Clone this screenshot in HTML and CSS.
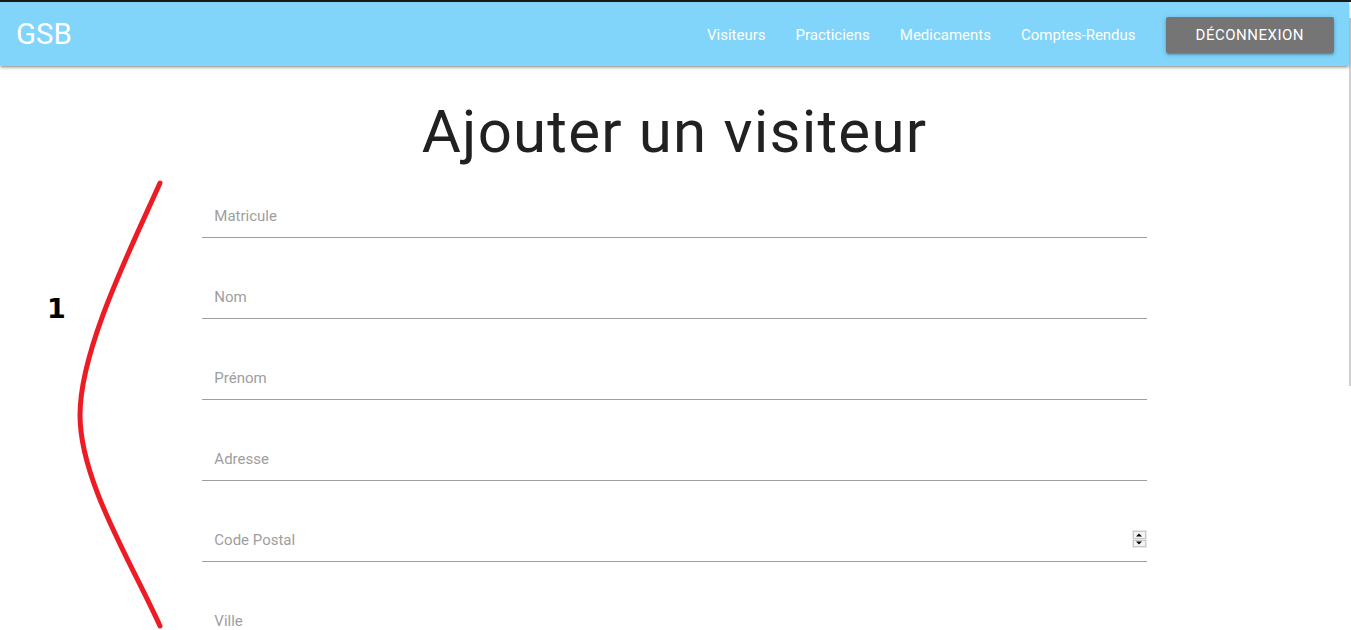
FILE: index.html
```html
<!DOCTYPE html>
<html lang="fr">
<head>
<meta charset="utf-8">
<title>GSB - Ajouter un visiteur</title>
<link rel="stylesheet" href="styles.css">
</head>
<body>
<div class="topline"></div>
<div class="page">
  <nav class="navbar">
    <a class="brand" href="#">GSB</a>
    <ul class="menu">
      <li><a href="#">Visiteurs</a></li>
      <li><a href="#">Practiciens</a></li>
      <li><a href="#">Medicaments</a></li>
      <li><a href="#">Comptes-Rendus</a></li>
      <li><a class="btn" href="#">Déconnexion</a></li>
    </ul>
  </nav>
  <main class="container">
    <h1 class="title">Ajouter un visiteur</h1>
    <form class="form">
      <div class="field"><input type="text" placeholder="Matricule"></div>
      <div class="field"><input type="text" placeholder="Nom"></div>
      <div class="field"><input type="text" placeholder="Prénom"></div>
      <div class="field"><input type="text" placeholder="Adresse"></div>
      <div class="field"><input type="text" placeholder="Code Postal"><span class="spin"><span class="up"></span><span class="down"></span></span></div>
      <div class="field"><input type="text" placeholder="Ville"></div>
    </form>
  </main>
</div>
<div class="scrollthumb"></div>
<div class="annot-num">1</div>
<svg class="annot-curve" width="200" height="640" viewBox="0 0 200 640">
  <path d="M160 183 C130 250 80 350 80 415 C80 480 130 560 160 626" fill="none" stroke="#ed1c24" stroke-width="5" stroke-linecap="round"/>
</svg>
</body>
</html>
```
FILE: styles.css
```css
html, body {
  margin: 0;
  padding: 0;
  background: #fff;
  font-family: Roboto, "Liberation Sans", sans-serif;
  overflow: hidden;
}
.topline {
  height: 2px;
  background: #1a1a1a;
}
.page {
  width: 1349px;
}
.navbar {
  height: 62px;
  padding-top: 2px;
  background: #81d4fa;
  display: flex;
  align-items: center;
  justify-content: space-between;
  box-shadow: 0 2px 2px 0 rgba(0,0,0,.14), 0 3px 1px -2px rgba(0,0,0,.12), 0 1px 5px 0 rgba(0,0,0,.2);
  position: relative;
  z-index: 1;
}
.brand {
  color: #fff;
  text-decoration: none;
  font-size: 29.4px;
  margin: -2px 0 0 16px;
  line-height: 62px;
}
.menu {
  list-style: none;
  margin: 0 15px 0 0;
  padding: 0;
  display: flex;
  align-items: center;
}
.menu a {
  display: block;
  color: #fff;
  text-decoration: none;
  font-size: 15px;
  padding: 0 15px;
  line-height: 62px;
}
.menu .btn {
  margin-left: 15px;
  background: #757575;
  height: 36px;
  line-height: 36px;
  padding: 0 30px;
  font-size: 15px;
  font-weight: 400;
  letter-spacing: .5px;
  text-transform: uppercase;
  border-radius: 2px;
  box-shadow: 0 2px 2px 0 rgba(0,0,0,.14), 0 3px 1px -2px rgba(0,0,0,.12), 0 1px 5px 0 rgba(0,0,0,.2);
}
.container {
  width: 70%;
  margin: 0 auto;
}
.title {
  margin: 31px 0 0;
  font-size: 60px;
  font-weight: 400;
  line-height: 70px;
  letter-spacing: 1.2px;
  text-align: center;
  color: #212121;
}
.form {
  margin-top: 23px;
}
.field {
  position: relative;
  margin-bottom: 33px;
}
.field input {
  display: block;
  width: 100%;
  box-sizing: border-box;
  height: 48px;
  border: none;
  border-bottom: 1px solid #9e9e9e;
  padding: 5px 12px 0;
  font-family: Roboto, "Liberation Sans", sans-serif;
  font-size: 15px;
  background: transparent;
  outline: none;
  color: #212121;
}
.field input::placeholder {
  color: #9e9e9e;
}
.spin {
  position: absolute;
  right: 0;
  top: 16px;
  width: 15px;
  height: 18px;
  background: #e8e8e8;
  display: flex;
  flex-direction: column;
  justify-content: center;
  gap: 1px;
  box-sizing: border-box;
  padding: 1px;
}
.spin span {
  flex: 1;
  background: #f4f4f4;
  border: 1px solid #c8c8c8;
  position: relative;
}
.spin .up::after, .spin .down::after {
  content: "";
  position: absolute;
  left: 50%;
  top: 50%;
  transform: translate(-50%, -50%);
  border-left: 3px solid transparent;
  border-right: 3px solid transparent;
}
.spin .up::after {
  border-bottom: 3px solid #000;
}
.spin .down::after {
  border-top: 3px solid #000;
}
.scrollthumb {
  position: absolute;
  left: 1349px;
  top: 18px;
  width: 2px;
  height: 368px;
  background: #d0d0d0;
}
.annot-num {
  position: absolute;
  left: 47px;
  top: 293px;
  font-family: "DejaVu Sans", "Liberation Sans", sans-serif;
  font-weight: bold;
  font-size: 27px;
  color: #000;
}
.annot-curve {
  position: absolute;
  left: 0;
  top: 0;
}
```
